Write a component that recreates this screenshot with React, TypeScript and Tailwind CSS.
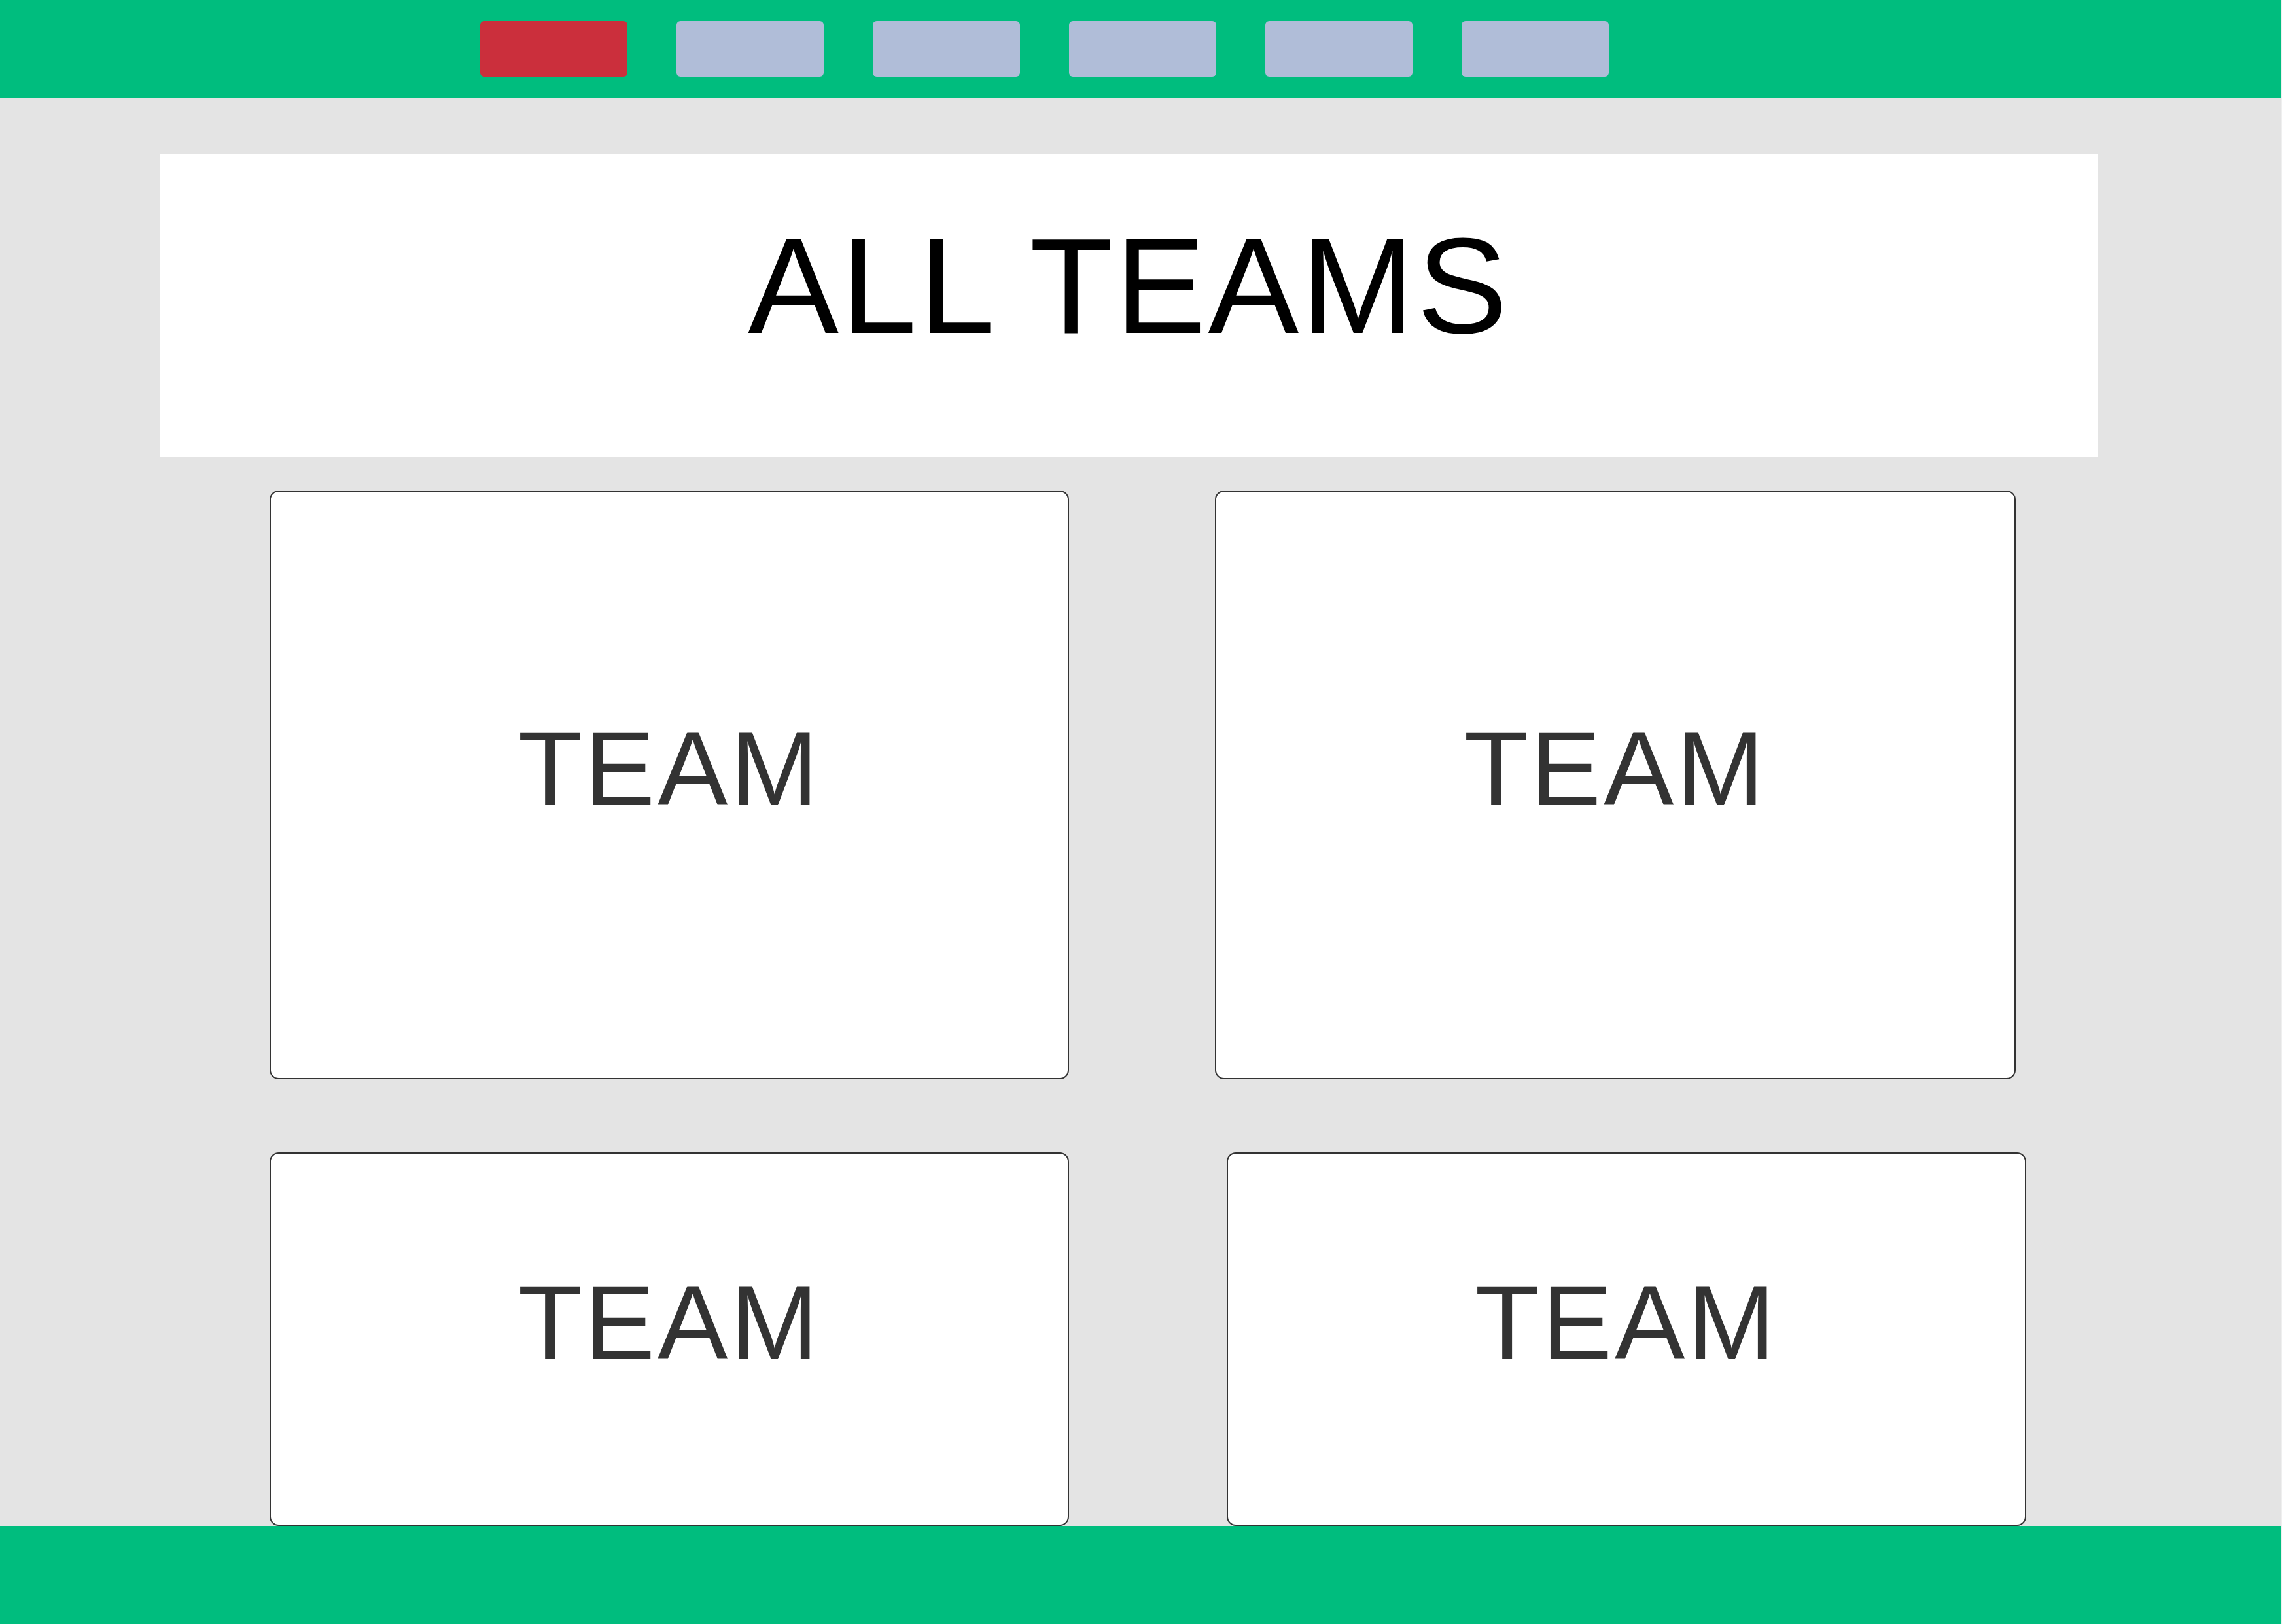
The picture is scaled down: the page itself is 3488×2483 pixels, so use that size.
const navItems = [
  { id: 'home', active: true },
  { id: 'teams', active: false },
  { id: 'players', active: false },
  { id: 'matches', active: false },
  { id: 'stats', active: false },
  { id: 'about', active: false },
]

function NavBar() {
  return (
    <header className="h-[150px] shrink-0 bg-[#00bd7e] flex items-start pt-[32px] pl-[734px] gap-[75px]">
      {navItems.map(item => (
        <div
          key={item.id}
          className={
            item.active
              ? 'w-[225px] h-[85px] rounded-[6px] bg-[#cb2f3c]'
              : 'w-[225px] h-[85px] rounded-[6px] bg-[#b0bdd8]'
          }
        />
      ))}
    </header>
  )
}

function TeamCard({ className }: { className: string }) {
  return (
    <div
      className={
        'bg-white border-2 border-[#333333] rounded-[14px] flex items-center justify-center pb-[50px] ' +
        className
      }
    >
      <span className="text-[161px] leading-none tracking-[4px] text-[#333333]">TEAM</span>
    </div>
  )
}

export default function App() {
  return (
    <div
      className="w-[3488px] h-[2483px] flex flex-col bg-[#e4e4e4] border-r border-r-[#ffffff66] overflow-hidden"
      style={{ fontFamily: '"Liberation Sans", Arial, sans-serif' }}
    >
      <NavBar />

      <main className="flex-1 flex flex-col pt-[86px]">
        {/* page title */}
        <div className="ml-[245px] w-[2961px] h-[463px] bg-white flex justify-center pt-[97px]">
          <h1 className="text-[208px] leading-none tracking-[3.5px] text-black font-normal">ALL TEAMS</h1>
        </div>

        {/* team grid */}
        <div className="mt-[51px] flex pl-[412px] gap-[223px]">
          <TeamCard className="w-[1222px] h-[900px]" />
          <TeamCard className="w-[1224px] h-[900px]" />
        </div>
        <div className="mt-[112px] flex pl-[412px] gap-[241px]">
          <TeamCard className="w-[1222px] h-[571px]" />
          <TeamCard className="w-[1222px] h-[571px]" />
        </div>
      </main>

      <footer className="h-[150px] shrink-0 bg-[#00bd7e]" />
    </div>
  )
}
